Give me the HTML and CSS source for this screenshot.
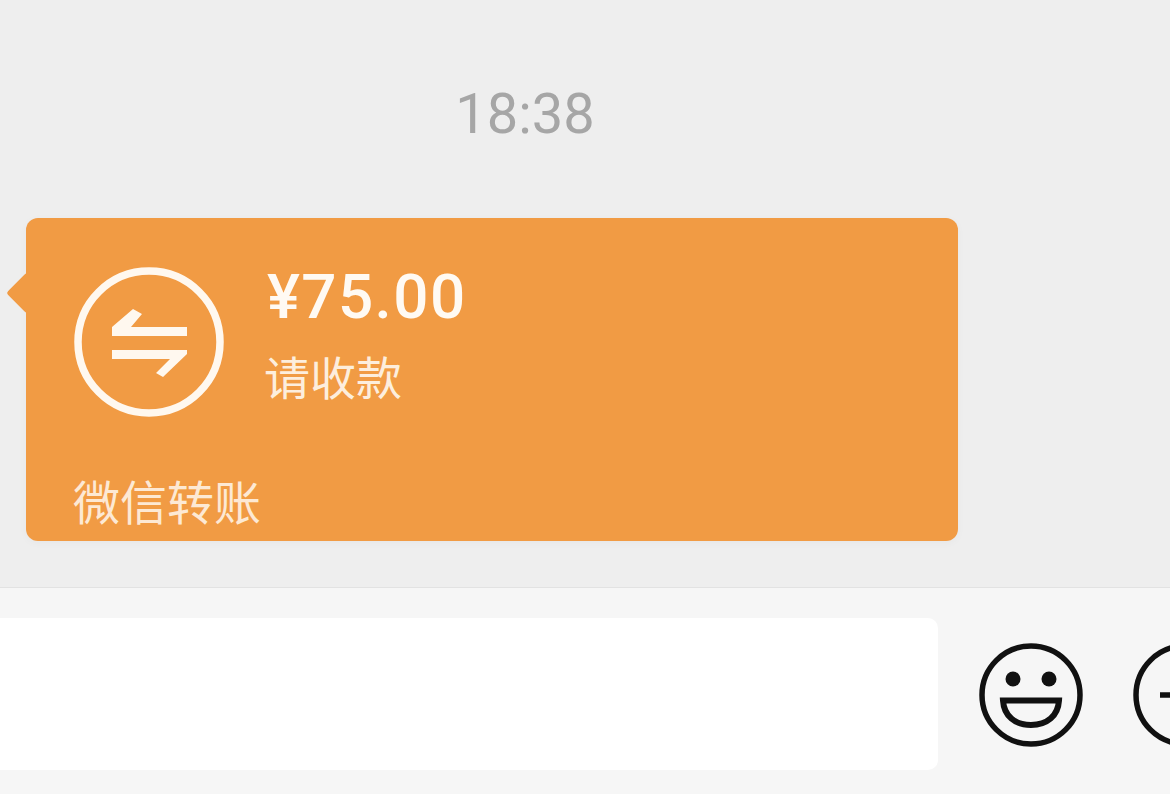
FILE: index.html
```html
<!DOCTYPE html>
<html lang="zh-CN">
<head>
  <meta charset="UTF-8">
  <title>微信转账</title>
  <link rel="stylesheet" href="styles.css">
</head>
<body>
  <div class="chat">
    <div class="time">18:38</div>
    <div class="bubble">
      <div class="bubble-main">
        <svg class="transfer-icon" viewBox="0 0 152 152" aria-hidden="true">
          <circle cx="75" cy="75" r="71" fill="none" stroke="#fff8ef" stroke-width="7.500"/>
          <path d="M38 69V60L59 42L68 47L57 60H113V69Z" fill="#fff8ef"/>
          <path d="M38 83H113V87L89 110L82 106L96 92H38Z" fill="#fff8ef"/>
        </svg>
        <div class="bubble-text">
          <div class="amount">¥75.00</div>
          <div class="note">请收款</div>
        </div>
      </div>
      <div class="bubble-footer">微信转账</div>
    </div>
  </div>

  <div class="input-bar">
    <div class="input-box"></div>
    <svg class="bar-icon" viewBox="0 0 104 104" aria-hidden="true">
      <circle cx="52" cy="52" r="49" fill="none" stroke="#111" stroke-width="5.500"/>
      <circle cx="34" cy="36" r="7.500" fill="#111"/>
      <circle cx="70" cy="36" r="7.500" fill="#111"/>
      <path d="M24 57.500H80C79 73 68 82 52 82C36 82 25 73 24 57.500Z" fill="none" stroke="#111" stroke-width="6"/>
    </svg>
    <svg class="bar-icon" viewBox="0 0 104 104" aria-hidden="true">
      <circle cx="52" cy="52" r="49" fill="none" stroke="#111" stroke-width="5.500"/>
      <path d="M27 52H77M52 27V77" fill="none" stroke="#111" stroke-width="5.500"/>
    </svg>
  </div>
</body>
</html>
```

FILE: styles.css
```css
* {
  box-sizing: border-box;
}

html,
body {
  height: 100%;
}

body {
  margin: 0;
  overflow: hidden;
  background-color: #f6f6f6;
  font-family: "Roboto", "Noto Sans CJK SC", sans-serif;
}

.chat {
  height: 588px;
  padding-top: 83px;
  background-color: #eeeeee;
  border-bottom: 1px solid #e2e2e2;
}

.time {
  height: 62px;
  padding-right: 120px;
  text-align: center;
  font-size: 56px;
  line-height: 62px;
  color: #a6a6a6;
}

.bubble {
  position: relative;
  width: 932px;
  height: 323px;
  margin: 73px 0 0 26px;
  padding: 49px 48px 0;
  background-color: #f19b44;
  border-radius: 12px;
  box-shadow: 0 2px 8px rgba(0, 0, 0, 0.03);
  color: #fff8ef;
}

/* little tail pointing at the avatar */
.bubble::before {
  content: "";
  position: absolute;
  left: -14px;
  top: 60px;
  width: 30px;
  height: 30px;
  background-color: #f19b44;
  border-radius: 4px;
  transform: rotate(45deg);
  clip-path: polygon(0 0, 100% 100%, 0 100%);
}

.bubble-main {
  display: flex;
  gap: 43px;
}

.transfer-icon {
  width: 152px;
  height: 152px;
  flex-shrink: 0;
}

.bubble-text {
  display: flex;
  flex-direction: column;
}

.amount {
  margin-top: -5px;
  margin-left: -2px;
  font-size: 62px;
  font-weight: 500;
  line-height: 70px;
  letter-spacing: 1.400px;
  color: #fffaf3;
}

.note {
  margin-top: 19px;
  margin-left: -5px;
  font-size: 46px;
  line-height: 56px;
  color: #fdeedd;
}

.bubble-footer {
  margin-top: 57px;
  margin-left: -1px;
  font-size: 47px;
  line-height: 56px;
  color: #fde9d4;
}

.input-bar {
  display: flex;
  align-items: center;
  height: 205px;
  padding-top: 6px;
  overflow: hidden;
}

.input-box {
  width: 958px;
  height: 152px;
  margin-left: -20px;
  flex-shrink: 0;
  background-color: #ffffff;
  border-radius: 10px;
}

.bar-icon {
  width: 104px;
  height: 104px;
  margin-top: 2px;
  margin-left: 50px;
  flex-shrink: 0;
}

.bar-icon:first-of-type {
  margin-left: 41px;
}
```
